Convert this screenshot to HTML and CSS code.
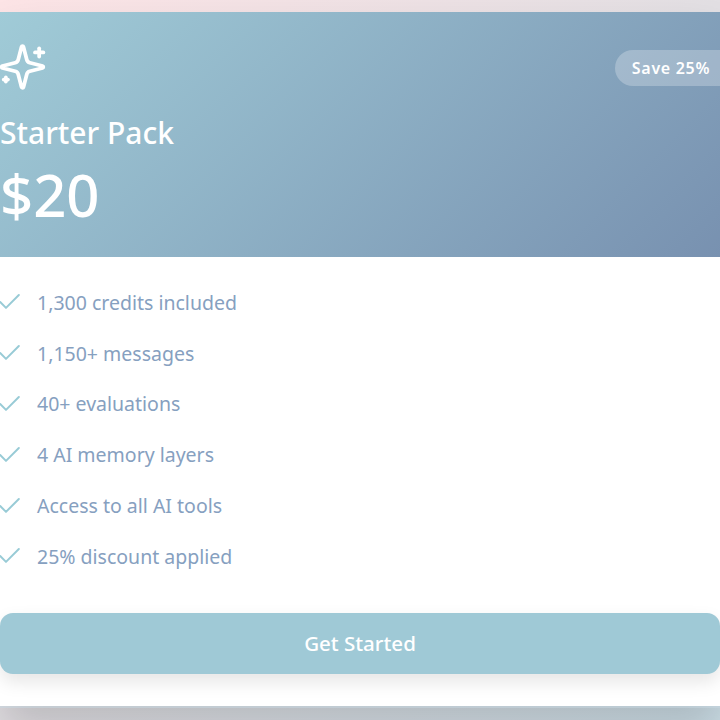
FILE: index.html
```html
<!DOCTYPE html>
<html lang="en">
<head>
    <meta charset="UTF-8">
    <meta name="viewport" content="width=device-width, initial-scale=1.0">
    <title>Starter Pack</title>
    <link rel="stylesheet" href="styles.css">
</head>
<body>
    <div class="card">
        <div class="card-header">
            <svg class="sparkle" width="50" height="50" viewBox="1.200 0 24 24" fill="none" stroke="#fff" stroke-width="1.800" stroke-linecap="round" stroke-linejoin="round">
                <path d="M9.937 15.500A2 2 0 0 0 8.500 14.063l-6.135-1.582a.5.5 0 0 1 0-.962L8.500 9.936A2 2 0 0 0 9.937 8.500l1.582-6.135a.5.5 0 0 1 .963 0L14.063 8.500A2 2 0 0 0 15.500 9.937l6.135 1.581a.5.5 0 0 1 0 .964L15.500 14.063a2 2 0 0 0-1.437 1.437l-1.582 6.135a.5.5 0 0 1-.963 0z"/>
                <path d="M20 3v4"/>
                <path d="M22 5h-4"/>
                <path d="M4 17v2"/>
                <path d="M5 18H3"/>
            </svg>
            <span class="badge">Save 25%</span>
            <h2 class="plan-name">Starter Pack</h2>
            <div class="price">$20</div>
        </div>
        <div class="card-body">
            <ul class="features">
                <li><svg class="check" width="28" height="28" viewBox="3.860 0 24 24" fill="none" stroke="#98cbd6" stroke-width="1.700" stroke-linecap="round" stroke-linejoin="round"><path d="M20 6 9 17l-5-5"/></svg>1,300 credits included</li>
                <li><svg class="check" width="28" height="28" viewBox="3.860 0 24 24" fill="none" stroke="#98cbd6" stroke-width="1.700" stroke-linecap="round" stroke-linejoin="round"><path d="M20 6 9 17l-5-5"/></svg>1,150+ messages</li>
                <li><svg class="check" width="28" height="28" viewBox="3.860 0 24 24" fill="none" stroke="#98cbd6" stroke-width="1.700" stroke-linecap="round" stroke-linejoin="round"><path d="M20 6 9 17l-5-5"/></svg>40+ evaluations</li>
                <li><svg class="check" width="28" height="28" viewBox="3.860 0 24 24" fill="none" stroke="#98cbd6" stroke-width="1.700" stroke-linecap="round" stroke-linejoin="round"><path d="M20 6 9 17l-5-5"/></svg>4 AI memory layers</li>
                <li><svg class="check" width="28" height="28" viewBox="3.860 0 24 24" fill="none" stroke="#98cbd6" stroke-width="1.700" stroke-linecap="round" stroke-linejoin="round"><path d="M20 6 9 17l-5-5"/></svg>Access to all AI tools</li>
                <li><svg class="check" width="28" height="28" viewBox="3.860 0 24 24" fill="none" stroke="#98cbd6" stroke-width="1.700" stroke-linecap="round" stroke-linejoin="round"><path d="M20 6 9 17l-5-5"/></svg>25% discount applied</li>
            </ul>
            <button class="cta">Get Started</button>
        </div>
    </div>
</body>
</html>
```

FILE: styles.css
```css
html, body {
    height: 100%;
}
body {
    margin: 0;
    overflow: hidden;
    padding: 12px 0 14px;
    box-sizing: border-box;
    font-family: "Noto Sans", sans-serif;
    background: linear-gradient(135deg, #fde4e6 0%, #e2dfe3 50%, #cbdde6 100%);
}
.card {
    background: #fff;
    height: 694px;
    box-shadow: 0 1px 0 1px rgba(200, 215, 225, 0.5), 0 25px 40px rgba(0, 0, 0, 0.16);
}
.card-header {
    position: relative;
    height: 245px;
    box-sizing: border-box;
    padding-top: 30px;
    background: linear-gradient(135deg, #a0cbd7 0%, #7891b0 100%);
    color: #fff;
}
.sparkle {
    display: block;
}
/* pill is cut by the window edge, so only the left side is round */
.badge {
    position: absolute;
    top: 38px;
    right: 0;
    width: 105px;
    height: 36px;
    padding-left: 7px;
    box-sizing: border-box;
    line-height: 36px;
    text-align: center;
    border-radius: 18px 0 0 18px;
    background: rgba(255, 255, 255, 0.25);
    font-size: 16px;
    font-weight: 600;
    letter-spacing: 0.7px;
}
.plan-name {
    margin: 22px 0 0;
    font-size: 30px;
    font-weight: 500;
    line-height: 38px;
}
.price {
    margin: 8px 0 0;
    font-size: 58px;
    font-weight: 500;
    line-height: 70px;
}
.card-body {
    padding-top: 20px;
}
.features {
    list-style: none;
    margin: 0;
    padding: 0;
}
.features li {
    display: flex;
    align-items: center;
    gap: 9px;
    height: 50.800px;
    font-size: 19.500px;
    color: #86a0c0;
}
.check {
    flex: none;
}
.cta {
    display: block;
    width: 100%;
    height: 61px;
    margin-top: 31px;
    border: none;
    border-radius: 13px;
    background: #9fc9d6;
    color: #fff;
    font-family: inherit;
    font-size: 20.500px;
    font-weight: 500;
    box-shadow: 0 8px 18px rgba(0, 0, 0, 0.1);
}
```
